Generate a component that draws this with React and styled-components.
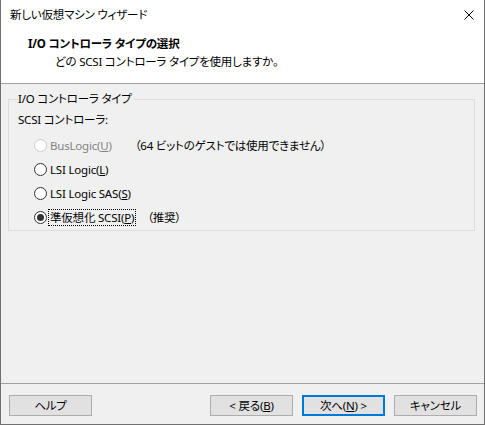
import styled, { createGlobalStyle } from 'styled-components'

const GlobalStyle = createGlobalStyle`
  html, body {
    margin: 0;
    padding: 0;
    background: #ffffff;
  }
  body {
    font-family: "Noto Sans", "Noto Sans CJK JP", sans-serif;
    font-size: 11.5px;
    letter-spacing: -0.2px;
    font-feature-settings: "palt";
    color: #000;
  }
`

const options = [
  { label: 'BusLogic', key: 'U', disabled: true, note: '（64 ビットのゲストでは使用できません）', noteGap: 22 },
  { label: 'LSI Logic', key: 'L' },
  { label: 'LSI Logic SAS', key: 'S' },
  { label: '準仮想化 SCSI', key: 'P', checked: true, focused: true, note: '（推奨）', noteGap: 12 },
]

const App = () => {
  return (
    <>
      <GlobalStyle />
      <Window>
        <TitleBar>
          <TitleText>新しい仮想マシン ウィザード</TitleText>
          <CloseIcon viewBox="0 0 10 10">
            <path d="M0.5 0.5 L9.5 9.5 M9.5 0.5 L0.5 9.5" stroke="#000" strokeWidth="1" fill="none" />
          </CloseIcon>
        </TitleBar>
        <Header>
          <HeaderTitle>I/O コントローラ タイプの選択</HeaderTitle>
          <HeaderSub>どの SCSI コントローラ タイプを使用しますか。</HeaderSub>
        </Header>
        <Body>
          <Group>
            <Legend>I/O コントローラ タイプ</Legend>
            <GroupLabel>SCSI コントローラ:</GroupLabel>
            <RadioList>
              {options.map((o) => (
                <RadioRow key={o.key}>
                  <RadioCircle $disabled={o.disabled} $checked={o.checked} />
                  <RadioLabel $disabled={o.disabled} $focused={o.focused}>
                    {o.label}(<u>{o.key}</u>)
                  </RadioLabel>
                  {o.note && <Note style={{ marginLeft: o.noteGap }}>{o.note}</Note>}
                </RadioRow>
              ))}
            </RadioList>
          </Group>
        </Body>
        <Footer>
          <Button>ヘルプ</Button>
          <Spacer />
          <Button>&lt; 戻る(<u>B</u>)</Button>
          <Button $default>次へ(<u>N</u>) &gt;</Button>
          <Button>キャンセル</Button>
        </Footer>
      </Window>
    </>
  )
}

export default App

const Window = styled.div`
  width: 485px;
  height: 425px;
  box-sizing: border-box;
  border: 1px solid #707070;
  border-top: none;
  display: flex;
  flex-direction: column;
  background: #f0f0f0;
  overflow: hidden;
`
const TitleBar = styled.div`
  height: 30px;
  background: #fff;
  display: flex;
  align-items: center;
  justify-content: space-between;
  padding: 0 10px 0 9px;
  flex-shrink: 0;
`
const TitleText = styled.span`
  line-height: 16px;
`
const CloseIcon = styled.svg`
  width: 10px;
  height: 10px;
`
const Header = styled.div`
  height: 54px;
  background: #fff;
  border-bottom: 1px solid #a0a0a0;
  box-sizing: border-box;
  padding: 6px 0 0 27px;
  flex-shrink: 0;
`
const HeaderTitle = styled.div`
  font-weight: 700;
  line-height: 16px;
`
const HeaderSub = styled.div`
  padding-left: 27px;
  line-height: 16px;
  margin-top: 2px;
`
const Body = styled.div`
  flex: 1;
  padding: 7px 9px 0 7px;
`
const Group = styled.fieldset`
  margin: 0;
  padding: 5px 0 0 9px;
  border: 1px solid #dcdcdc;
  height: 140px;
  box-sizing: border-box;
  min-width: 0;
`
const Legend = styled.legend`
  padding: 0 2px 0 0;
  margin-left: 0;
  line-height: 16px;
`
const GroupLabel = styled.div`
  line-height: 16px;
`
const RadioList = styled.div`
  display: flex;
  flex-direction: column;
  gap: 8px;
  margin-top: 9px;
  padding-left: 16px;
`
const RadioRow = styled.div`
  display: flex;
  align-items: center;
  height: 16px;
`
const RadioCircle = styled.span`
  width: 13px;
  height: 13px;
  box-sizing: border-box;
  border-radius: 50%;
  border: 1px solid ${(p) => (p.$disabled ? '#cccccc' : '#333333')};
  background: #fff;
  display: flex;
  align-items: center;
  justify-content: center;
  flex-shrink: 0;
  &::after {
    content: '';
    width: 7px;
    height: 7px;
    border-radius: 50%;
    background: #333;
    display: ${(p) => (p.$checked ? 'block' : 'none')};
  }
`
const RadioLabel = styled.span`
  margin-left: 2px;
  padding: 0 1px;
  line-height: 15px;
  color: ${(p) => (p.$disabled ? '#838383' : '#000')};
  outline: ${(p) => (p.$focused ? '1px dotted #000' : 'none')};
  white-space: nowrap;
`
const Note = styled.span`
  white-space: nowrap;
`
const Footer = styled.div`
  height: 41px;
  box-sizing: border-box;
  border-top: 1px solid #a0a0a0;
  display: flex;
  align-items: flex-start;
  gap: 9px;
  padding: 11px 7px 0 8px;
  flex-shrink: 0;
`
const Spacer = styled.div`
  flex: 1;
`
const Button = styled.button`
  width: 83px;
  height: 21px;
  box-sizing: border-box;
  background: #e1e1e1;
  border: ${(p) => (p.$default ? '2px solid #0078d7' : '1px solid #adadad')};
  font-family: inherit;
  font-size: inherit;
  letter-spacing: inherit;
  font-feature-settings: "palt";
  color: #000;
  padding: 0;
  line-height: 16px;
`
